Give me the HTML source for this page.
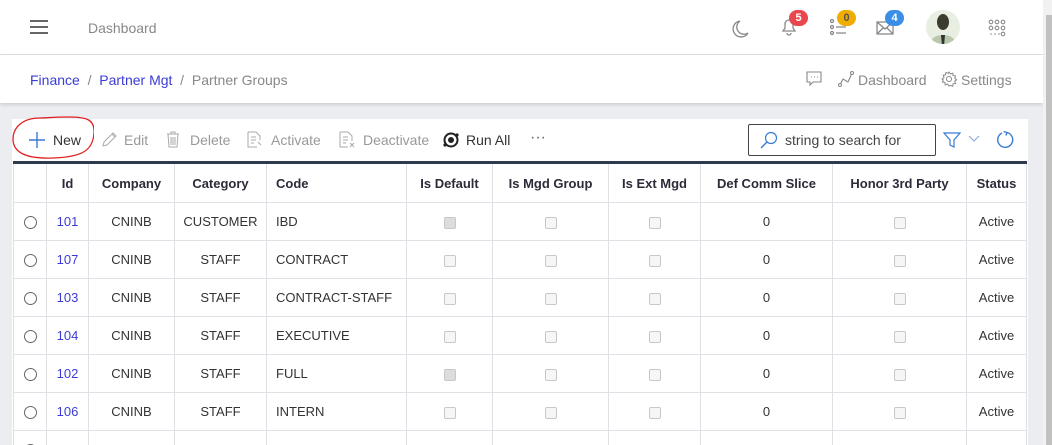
<!DOCTYPE html>
<html><head><meta charset="utf-8"><style>
*{box-sizing:border-box;margin:0;padding:0}
html,body{width:1052px;height:445px;overflow:hidden}
body{background:#ebedf0;font-family:"Liberation Sans",sans-serif;font-size:14px;color:#333;position:relative}
.top{position:absolute;left:0;top:0;width:1043px;height:55px;background:#fff;border-bottom:1px solid #d8dbe0}
.bc{position:absolute;left:0;top:55px;width:1043px;height:48px;background:#fff;box-shadow:0 2px 3px rgba(0,0,0,.12)}
.sb{position:absolute;left:1043px;top:0;width:9px;height:445px;background:#f1f1f1}
.sb div{position:absolute;left:3px;top:15px;width:6px;height:430px;background:#c1c1c1}
.card{position:absolute;left:12px;top:119px;width:1016px;height:326px;background:#fff;overflow:hidden}
.t{position:absolute;white-space:nowrap}
.badge{position:absolute;height:16px;min-width:19px;border-radius:8px;color:#fff;font-size:11px;font-weight:bold;text-align:center;line-height:16px}
table{position:absolute;left:1px;top:42px;border-collapse:collapse;border-top:3px solid #2e3a50;table-layout:fixed}
td,th{border:1px solid #dee2e6;height:38px;text-align:center;font-size:13px}
th{height:40px;font-weight:bold;color:#2b2b3a}
td.l,th.l{text-align:left;padding-left:9px}
.cb{display:inline-block;width:12px;height:12px;border:1px solid #c8c8c8;border-radius:2px;background:#f6f6f6;vertical-align:middle}
.rd{display:inline-block;width:13px;height:13px;border:1px solid #666;border-radius:50%;vertical-align:middle}
a{color:#3b3bd6;text-decoration:none}
.tb{position:absolute;top:132px;font-size:14px;color:#999}
</style></head><body>
<div class="top">
 <svg class="t" style="left:29px;top:19px" width="20" height="16"><path d="M1 2h18M1 8h18M1 14h18" stroke="#666" stroke-width="2"/></svg>
 <div class="t" style="left:88px;top:20px;font-size:14px;color:#888">Dashboard</div>
 <svg class="t" style="left:731px;top:19px" width="18" height="20"><path d="M9 2a8 8 0 1 0 8 12A7 7 0 0 1 9 2z" fill="none" stroke="#888" stroke-width="1.3"/></svg>
 <svg class="t" style="left:780px;top:16px" width="18" height="20"><path d="M3 15h12l-2-3V8a4 4 0 0 0-8 0v4zM7 17a2 2 0 0 0 4 0" fill="none" stroke="#888" stroke-width="1.3"/></svg>
 <div class="badge" style="left:789px;top:10px;background:#e8474e">5</div>
 <svg class="t" style="left:829px;top:17px" width="18" height="20"><g fill="none" stroke="#888" stroke-width="1.3"><circle cx="3" cy="4" r="1.5"/><circle cx="3" cy="10" r="1.5"/><circle cx="3" cy="16" r="1.5"/><path d="M7 10h10M7 16h10"/></g></svg>
 <div class="badge" style="left:837px;top:10px;background:#f0ad00;color:#555">0</div>
 <svg class="t" style="left:876px;top:19px" width="18" height="16"><path d="M1 3h16v12H1zM1 3l8 7 8-7M1 15l6-6M17 15l-6-6" fill="none" stroke="#888" stroke-width="1.3"/></svg>
 <div class="badge" style="left:885px;top:10px;background:#3a8ee6">4</div>
 <svg class="t" style="left:925px;top:8px" width="36" height="38"><defs><clipPath id="c"><circle cx="18" cy="19" r="17"/></clipPath></defs><g clip-path="url(#c)"><rect width="36" height="38" fill="#e8efe2"/><path d="M4 38c2-9 8-11 14-11s12 2 14 11z" fill="#b9c8ad"/><path d="M16 27h4l-1 11h-2z" fill="#333"/><ellipse cx="18" cy="14" rx="6" ry="8" fill="#3b3b30"/></g></svg>
 <svg class="t" style="left:988px;top:19px" width="20" height="20"><g fill="none" stroke="#888" stroke-width="1.1"><circle cx="3" cy="3" r="1.8"/><circle cx="9" cy="3" r="1.8"/><circle cx="15" cy="3" r="1.8"/><circle cx="3" cy="9" r="1.8"/><circle cx="9" cy="9" r="1.8"/><circle cx="15" cy="9" r="1.8"/><circle cx="15" cy="15" r="1.8"/></g><g fill="#888"><circle cx="3" cy="15" r=".8"/><circle cx="7" cy="15" r=".8"/><circle cx="11" cy="15" r=".8"/></g></svg>
</div>
<div class="bc">
 <div class="t" style="left:30px;top:17px;font-size:14px"><a>Finance</a> <span style="color:#888">&nbsp;/&nbsp;</span> <a>Partner Mgt</a> <span style="color:#888">&nbsp;/&nbsp; Partner Groups</span></div>
 <svg class="t" style="left:806px;top:16px" width="16" height="16"><path d="M1 1h14v10H7l-3 3v-3H1z" fill="none" stroke="#888" stroke-width="1.1"/><path d="M5 6h1M8 6h1M11 6h1" stroke="#888"/></svg>
 <svg class="t" style="left:838px;top:15px" width="16" height="18"><path d="M2 15l3-6 5 3 4-9" fill="none" stroke="#888" stroke-width="1.1"/><circle cx="2" cy="15" r="1.5" fill="#fff" stroke="#888"/><circle cx="14" cy="3" r="1.5" fill="#fff" stroke="#888"/></svg>
 <div class="t" style="left:858px;top:17px;color:#888">Dashboard</div>
 <svg class="t" style="left:941px;top:16px" width="16" height="16"><circle cx="8" cy="8" r="2.5" fill="none" stroke="#888"/><path d="M8 1l1.5 2 2.3-.8.3 2.4 2.4.3-.8 2.3 2 1.5-2 1.5.8 2.3-2.4.3-.3 2.4-2.3-.8L8 15l-1.5-2-2.3.8-.3-2.4-2.4-.3.8-2.3L1 8l2-1.5-.8-2.3 2.4-.3.3-2.4 2.3.8z" fill="none" stroke="#888"/></svg>
 <div class="t" style="left:961px;top:17px;color:#888">Settings</div>
</div>
<div class="sb"><div></div></div>
<div class="card">
 <table>
  <colgroup><col style="width:33px"><col style="width:42px"><col style="width:86px"><col style="width:92px"><col style="width:140px"><col style="width:86px"><col style="width:116px"><col style="width:92px"><col style="width:132px"><col style="width:134px"><col style="width:60px"></colgroup>
  <tr><th></th><th>Id</th><th>Company</th><th>Category</th><th class="l">Code</th><th>Is Default</th><th>Is Mgd Group</th><th>Is Ext Mgd</th><th>Def Comm Slice</th><th>Honor 3rd Party</th><th>Status</th></tr>
  <tr><td><span class="rd"></span></td><td><a>101</a></td><td>CNINB</td><td>CUSTOMER</td><td class="l">IBD</td><td><span class="cb" style="background:#ddd"></span></td><td><span class="cb"></span></td><td><span class="cb"></span></td><td>0</td><td><span class="cb"></span></td><td>Active</td></tr>
  <tr><td><span class="rd"></span></td><td><a>107</a></td><td>CNINB</td><td>STAFF</td><td class="l">CONTRACT</td><td><span class="cb"></span></td><td><span class="cb"></span></td><td><span class="cb"></span></td><td>0</td><td><span class="cb"></span></td><td>Active</td></tr>
  <tr><td><span class="rd"></span></td><td><a>103</a></td><td>CNINB</td><td>STAFF</td><td class="l">CONTRACT-STAFF</td><td><span class="cb"></span></td><td><span class="cb"></span></td><td><span class="cb"></span></td><td>0</td><td><span class="cb"></span></td><td>Active</td></tr>
  <tr><td><span class="rd"></span></td><td><a>104</a></td><td>CNINB</td><td>STAFF</td><td class="l">EXECUTIVE</td><td><span class="cb"></span></td><td><span class="cb"></span></td><td><span class="cb"></span></td><td>0</td><td><span class="cb"></span></td><td>Active</td></tr>
  <tr><td><span class="rd"></span></td><td><a>102</a></td><td>CNINB</td><td>STAFF</td><td class="l">FULL</td><td><span class="cb" style="background:#ddd"></span></td><td><span class="cb"></span></td><td><span class="cb"></span></td><td>0</td><td><span class="cb"></span></td><td>Active</td></tr>
  <tr><td><span class="rd"></span></td><td><a>106</a></td><td>CNINB</td><td>STAFF</td><td class="l">INTERN</td><td><span class="cb"></span></td><td><span class="cb"></span></td><td><span class="cb"></span></td><td>0</td><td><span class="cb"></span></td><td>Active</td></tr>
  <tr><td><span class="rd"></span></td><td></td><td></td><td></td><td></td><td><span class="cb"></span></td><td><span class="cb"></span></td><td><span class="cb"></span></td><td></td><td><span class="cb"></span></td><td></td></tr>
 </table>
</div>
<svg class="t" style="left:28px;top:131px" width="18" height="18"><path d="M9 1v16M1 9h16" stroke="#3a7bd5" stroke-width="1.4"/></svg>
<div class="tb" style="left:53px;color:#333">New</div>
<svg class="t" style="left:10px;top:114px" width="84" height="48"><path d="M30 4C12 4 3 14 3 25c0 13 12 20 40 19 30-1 40-8 41-25C85 5 76 3 58 3 45 3 35 4 30 4" fill="none" stroke="#e02020" stroke-width="1.3"/></svg>
<svg class="t" style="left:101px;top:131px" width="16" height="17"><path d="M2 15l1-4 9-9 3 3-9 9zM11 3l3 3" fill="none" stroke="#aaa"/></svg>
<div class="tb" style="left:124px">Edit</div>
<svg class="t" style="left:166px;top:131px" width="14" height="17"><path d="M1 3h12M5 3V1h4v2M2 3l1 13h8l1-13M5 6v8M7 6v8M9 6v8" fill="none" stroke="#aaa"/></svg>
<div class="tb" style="left:190px">Delete</div>
<svg class="t" style="left:247px;top:131px" width="16" height="17"><path d="M1 1h8l4 4v4M1 1v15h9M4 6h5M4 9h5M4 12h3M11 11l3 3" fill="none" stroke="#aaa"/></svg>
<div class="tb" style="left:271px">Activate</div>
<svg class="t" style="left:339px;top:131px" width="16" height="17"><path d="M1 1h8l4 4v5M1 1v15h8M4 6h5M4 9h5M4 12h3M11 12l4 4M15 12l-4 4" fill="none" stroke="#aaa"/></svg>
<div class="tb" style="left:363px">Deactivate</div>
<svg class="t" style="left:442px;top:131px" width="18" height="18"><circle cx="9" cy="9" r="6.5" fill="none" stroke="#222" stroke-width="2"/><circle cx="9" cy="9" r="3" fill="#222"/><circle cx="15" cy="4" r="1.6" fill="#222"/><circle cx="3" cy="14" r="1.6" fill="#222"/></svg>
<div class="tb" style="left:466px;color:#333">Run All</div>
<div class="tb" style="left:530px;top:133px;color:#666;font-size:16px;line-height:10px">···</div>
<div class="t" style="left:748px;top:124px;width:188px;height:32px;border:1px solid #444;border-radius:2px"></div>
<svg class="t" style="left:760px;top:131px" width="18" height="18"><circle cx="11" cy="7" r="5.5" fill="none" stroke="#3a7bd5" stroke-width="1.2"/><path d="M7 11l-6 6" stroke="#3a7bd5" stroke-width="1.4"/></svg>
<div class="t" style="left:785px;top:132px;color:#444">string to search for</div>
<svg class="t" style="left:943px;top:131px" width="18" height="18"><path d="M1 2h16l-6 7v7l-4 -2V9z" fill="none" stroke="#3a7bd5" stroke-width="1.2"/></svg>
<svg class="t" style="left:968px;top:135px" width="12" height="8"><path d="M1 1l5 5 5-5" fill="none" stroke="#8aa8d8" stroke-width="1.1"/></svg>
<svg class="t" style="left:995px;top:130px" width="20" height="20"><path d="M7 3A7.5 7.5 0 1 0 12 2.5" fill="none" stroke="#3a7bd5" stroke-width="1.4"/><path d="M12 2.5L8.5 1.5M12 2.5l-1 3" stroke="#3a7bd5" stroke-width="1.4"/></svg>
</body></html>
